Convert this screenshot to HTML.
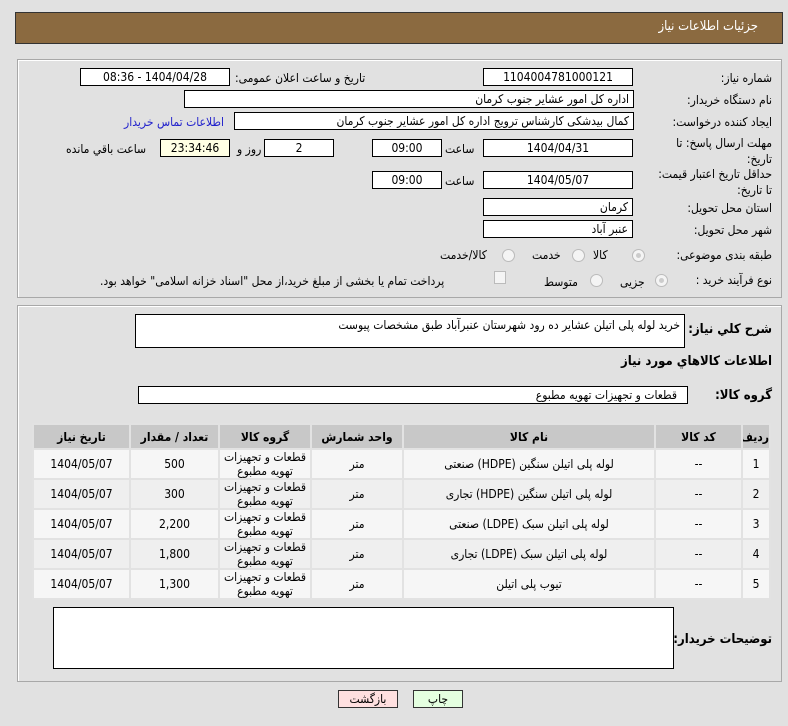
<!DOCTYPE html>
<html><head><meta charset="utf-8"><style>
body{margin:0;width:788px;height:726px;background:#e1e1e1;font-family:"DejaVu Sans Condensed","DejaVu Sans",sans-serif;font-stretch:condensed;font-size:12px;color:#000;position:relative;overflow:hidden}
.a{position:absolute}
.box{position:absolute;background:#fff;border:1px solid #000;box-sizing:border-box;height:18px;line-height:16px;padding:0 4px;direction:rtl;white-space:nowrap;overflow:hidden}
.c{text-align:center}
.l{position:absolute;direction:rtl;white-space:nowrap;line-height:16px}
.panel{position:absolute;border:1px solid #a8a8a8;box-sizing:border-box;box-shadow:inset 1px 1px 0 #fff}
.rad{position:absolute;width:11px;height:11px;border-radius:50%;border:1px solid #bbb;background:#f4f4f4}
table{position:absolute;left:32px;top:423px;width:739px;border-collapse:separate;border-spacing:2px;background:#e2e2e2;direction:rtl;table-layout:fixed}
td,th{text-align:center;font-size:12px;padding:0;white-space:nowrap;overflow:hidden}
th{background:#c8c8c8;height:23px;font-weight:bold}
td{background:#f6f6f6;height:28px;line-height:14px}
tr:nth-child(odd) td{background:#efefef}
</style></head><body>
<div class="a" style="left:15px;top:12px;width:768px;height:32px;background:#8b6a40;border:1px solid #333;box-sizing:border-box"></div>
<div class="l" style="right:30px;top:19px;color:#fff;font-size:13px">جزئیات اطلاعات نیاز</div>

<div class="panel" style="left:17px;top:59px;width:765px;height:239px"></div>

<div class="l" style="right:16px;top:70px">شماره نیاز:</div>
<div class="box c" style="left:483px;top:68px;width:150px">1104004781000121</div>
<div class="l" style="left:235px;top:70px">تاریخ و ساعت اعلان عمومی:</div>
<div class="box c" style="left:80px;top:68px;width:150px">1404/04/28 - 08:36</div>

<div class="l" style="right:16px;top:92px">نام دستگاه خریدار:</div>
<div class="box" style="left:184px;top:90px;width:450px">اداره کل امور عشایر جنوب کرمان</div>

<div class="l" style="right:16px;top:114px">ایجاد کننده درخواست:</div>
<div class="box" style="left:234px;top:112px;width:400px">کمال بیدشکی کارشناس ترویج اداره کل امور عشایر جنوب کرمان</div>
<div class="l" style="left:124px;top:114px;color:#2222cc">اطلاعات تماس خریدار</div>

<div class="l" style="right:16px;top:135px;line-height:16px">مهلت ارسال پاسخ: تا<br>تاریخ:</div>
<div class="box c" style="left:483px;top:139px;width:150px">1404/04/31</div>
<div class="l" style="left:445px;top:141px">ساعت</div>
<div class="box c" style="left:372px;top:139px;width:70px">09:00</div>
<div class="box c" style="left:264px;top:139px;width:70px">2</div>
<div class="l" style="left:237px;top:141px">روز و</div>
<div class="box c" style="left:160px;top:139px;width:70px;background:#ffffe4">23:34:46</div>
<div class="l" style="left:66px;top:141px">ساعت باقي مانده</div>

<div class="l" style="right:16px;top:166px;line-height:16px">حداقل تاریخ اعتبار قیمت:<br>تا تاریخ:</div>
<div class="box c" style="left:483px;top:171px;width:150px">1404/05/07</div>
<div class="l" style="left:445px;top:173px">ساعت</div>
<div class="box c" style="left:372px;top:171px;width:70px">09:00</div>

<div class="l" style="right:16px;top:200px">استان محل تحویل:</div>
<div class="box" style="left:483px;top:198px;width:150px">کرمان</div>
<div class="l" style="right:16px;top:222px">شهر محل تحویل:</div>
<div class="box" style="left:483px;top:220px;width:150px">عنبر آباد</div>

<div class="l" style="right:16px;top:247px">طبقه بندی موضوعی:</div>
<div class="rad" style="left:632px;top:249px"><div style="margin:3px;width:5px;height:5px;border-radius:50%;background:#ccc"></div></div>
<div class="l" style="left:593px;top:247px">کالا</div>
<div class="rad" style="left:572px;top:249px"></div>
<div class="l" style="left:532px;top:247px">خدمت</div>
<div class="rad" style="left:502px;top:249px"></div>
<div class="l" style="left:440px;top:247px">کالا/خدمت</div>

<div class="l" style="right:16px;top:272px">نوع فرآیند خرید :</div>
<div class="rad" style="left:655px;top:274px"><div style="margin:3px;width:5px;height:5px;border-radius:50%;background:#ccc"></div></div>
<div class="l" style="left:620px;top:274px">جزیی</div>
<div class="rad" style="left:590px;top:274px"></div>
<div class="l" style="left:544px;top:274px">متوسط</div>
<div class="a" style="left:494px;top:271px;width:10px;height:11px;border:1px solid #bbb;background:#f4f4f4"></div>
<div class="l" style="left:100px;top:273px">پرداخت تمام یا بخشی از مبلغ خرید،از محل "اسناد خزانه اسلامی" خواهد بود.</div>

<div class="panel" style="left:17px;top:305px;width:765px;height:377px"></div>
<div class="l" style="right:16px;top:322px;font-weight:bold;font-size:13px">شرح کلي نياز:</div>
<div class="box" style="left:135px;top:314px;width:550px;height:34px;line-height:20px">خرید لوله پلی اتیلن عشایر ده رود شهرستان عنبرآباد طبق مشخصات پیوست</div>
<div class="l" style="right:16px;top:354px;font-weight:bold;font-size:13px">اطلاعات کالاهاي مورد نياز</div>
<div class="l" style="right:16px;top:388px;font-weight:bold;font-size:13px">گروه کالا:</div>
<div class="box" style="left:138px;top:386px;width:550px;padding-right:10px">قطعات و تجهیزات تهویه مطبوع</div>

<table>
<colgroup><col style="width:26px"><col style="width:85px"><col style="width:250px"><col style="width:90px"><col style="width:90px"><col style="width:87px"><col></colgroup>
<tr><th>رديف</th><th>کد کالا</th><th>نام کالا</th><th>واحد شمارش</th><th>گروه کالا</th><th>تعداد / مقدار</th><th>تاریخ نیاز</th></tr>
<tr><td>1</td><td>--</td><td>لوله پلی اتیلن سنگین (HDPE) صنعتی</td><td>متر</td><td>قطعات و تجهیزات<br>تهویه مطبوع</td><td>500</td><td>1404/05/07</td></tr>
<tr><td>2</td><td>--</td><td>لوله پلی اتیلن سنگین (HDPE) تجاری</td><td>متر</td><td>قطعات و تجهیزات<br>تهویه مطبوع</td><td>300</td><td>1404/05/07</td></tr>
<tr><td>3</td><td>--</td><td>لوله پلی اتیلن سبک (LDPE) صنعتی</td><td>متر</td><td>قطعات و تجهیزات<br>تهویه مطبوع</td><td>2,200</td><td>1404/05/07</td></tr>
<tr><td>4</td><td>--</td><td>لوله پلی اتیلن سبک (LDPE) تجاری</td><td>متر</td><td>قطعات و تجهیزات<br>تهویه مطبوع</td><td>1,800</td><td>1404/05/07</td></tr>
<tr><td>5</td><td>--</td><td>تیوب پلی اتیلن</td><td>متر</td><td>قطعات و تجهیزات<br>تهویه مطبوع</td><td>1,300</td><td>1404/05/07</td></tr>
</table>

<div class="l" style="right:16px;top:632px;font-weight:bold;font-size:13px">توضیحات خریدار:</div>
<div class="box" style="left:53px;top:607px;width:621px;height:62px"></div>

<div class="a" style="left:338px;top:690px;width:60px;height:18px;background:#ffe0e0;border:1px solid #333;box-sizing:border-box;text-align:center;line-height:16px">بازگشت</div>
<div class="a" style="left:413px;top:690px;width:50px;height:18px;background:#e4ffe0;border:1px solid #333;box-sizing:border-box;text-align:center;line-height:16px">چاپ</div>
</body></html>
